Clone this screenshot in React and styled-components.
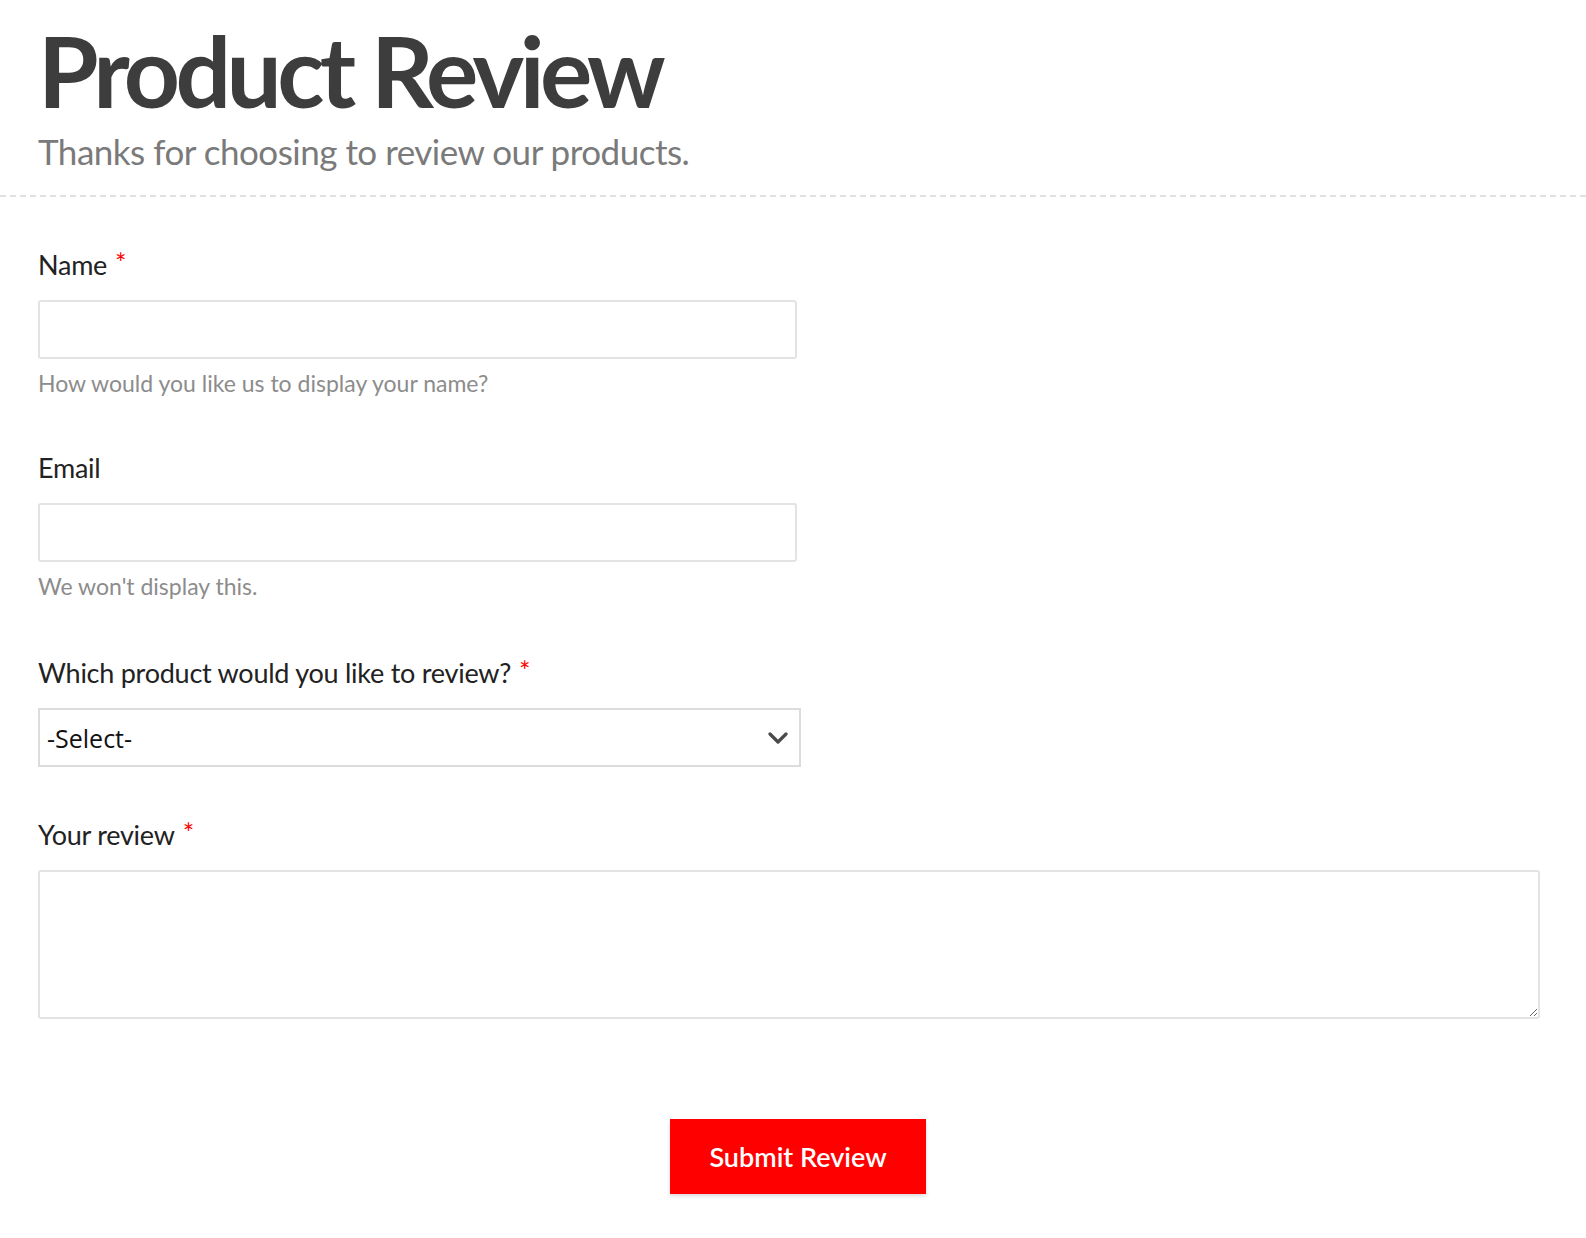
import React from "react";
import styled, { createGlobalStyle } from "styled-components";

const GlobalStyle = createGlobalStyle`
  * {
    box-sizing: border-box;
  }
  body {
    margin: 0;
    background: #ffffff;
    font-family: "Lato", "Open Sans", sans-serif;
  }
`;

const Page = styled.div`
  width: 100%;
  padding-bottom: 40px;
`;

const Header = styled.header`
  padding: 21px 38px 23px;
  border-bottom: 2px dashed #e0e0e0;
`;

const Title = styled.h1`
  margin: 0;
  font-size: 98px;
  line-height: 98px;
  font-weight: 700;
  color: #3d3d3d;
  letter-spacing: -4.6px;
`;

const Subtitle = styled.p`
  margin: 11px 0 0;
  font-size: 35px;
  line-height: 42px;
  color: #7a7a7a;
  letter-spacing: -0.5px;
`;

const Form = styled.form`
  padding: 48px 46px 0 38px;
`;

const Field = styled.div`
  display: flex;
  flex-direction: column;
  margin-bottom: ${({ $gap }) => $gap}px;
`;

const Label = styled.label`
  font-size: 27px;
  line-height: 36px;
  color: #222222;
  letter-spacing: -0.25px;
  margin-bottom: ${({ $space }) => $space || 17}px;
`;

const Required = styled.span`
  color: #ff0000;
  font-size: 27px;
  margin-left: 8px;
  vertical-align: 2px;
`;

const TextInput = styled.input`
  width: 759px;
  height: 59px;
  border: 2px solid #e3e3e3;
  border-radius: 3px;
  padding: 0 10px;
  font-size: 22px;
  outline: none;
`;

const Help = styled.div`
  margin-top: 6px;
  font-size: 23px;
  line-height: 36px;
  color: #8c8c8c;
`;

const SelectWrap = styled.div`
  position: relative;
  width: 763px;
`;

const Select = styled.select`
  width: 100%;
  height: 59px;
  border: 2px solid #dcdcdc;
  border-radius: 0;
  background: #ffffff;
  padding: 0 7px;
  font-family: "Open Sans", sans-serif;
  font-size: 25px;
  color: #111111;
  appearance: none;
  outline: none;
`;

const Chevron = styled.svg`
  position: absolute;
  right: 13px;
  top: 24px;
  pointer-events: none;
`;

const TextArea = styled.textarea`
  width: 100%;
  height: 149px;
  border: 2px solid #e3e3e3;
  border-radius: 3px;
  padding: 10px;
  font-size: 22px;
  outline: none;
  resize: vertical;
`;

const Actions = styled.div`
  display: flex;
  justify-content: center;
  padding-left: 18px;
  margin-top: 100px;
`;

const SubmitButton = styled.button`
  width: 256px;
  height: 75px;
  border: none;
  background: #ff0000;
  color: #ffffff;
  font-family: "Lato", sans-serif;
  font-size: 27px;
  font-weight: 600;
  box-shadow: 0 2px 4px rgba(0, 0, 0, 0.15);
  cursor: pointer;
`;

export default function App() {
  return (
    <Page>
      <GlobalStyle />
      <Header>
        <Title>Product Review</Title>
        <Subtitle>Thanks for choosing to review our products.</Subtitle>
      </Header>
      <Form onSubmit={(e) => e.preventDefault()}>
        <Field $gap={49}>
          <Label>
            Name<Required>*</Required>
          </Label>
          <TextInput type="text" />
          <Help>How would you like us to display your name?</Help>
        </Field>
        <Field $gap={49}>
          <Label>Email</Label>
          <TextInput type="email" />
          <Help>We won't display this.</Help>
        </Field>
        <Field $gap={48}>
          <Label>
            Which product would you like to review?<Required>*</Required>
          </Label>
          <SelectWrap>
            <Select defaultValue="">
              <option value="">-Select-</option>
            </Select>
            <Chevron width="20" height="12" viewBox="0 0 20 12">
              <path
                d="M2 2 L10 10 L18 2"
                fill="none"
                stroke="#4a4a4a"
                strokeWidth="3.2"
                strokeLinecap="round"
                strokeLinejoin="round"
              />
            </Chevron>
          </SelectWrap>
        </Field>
        <Field $gap={0}>
          <Label $space={17}>
            Your review<Required>*</Required>
          </Label>
          <TextArea />
        </Field>
        <Actions>
          <SubmitButton type="submit">Submit Review</SubmitButton>
        </Actions>
      </Form>
    </Page>
  );
}
